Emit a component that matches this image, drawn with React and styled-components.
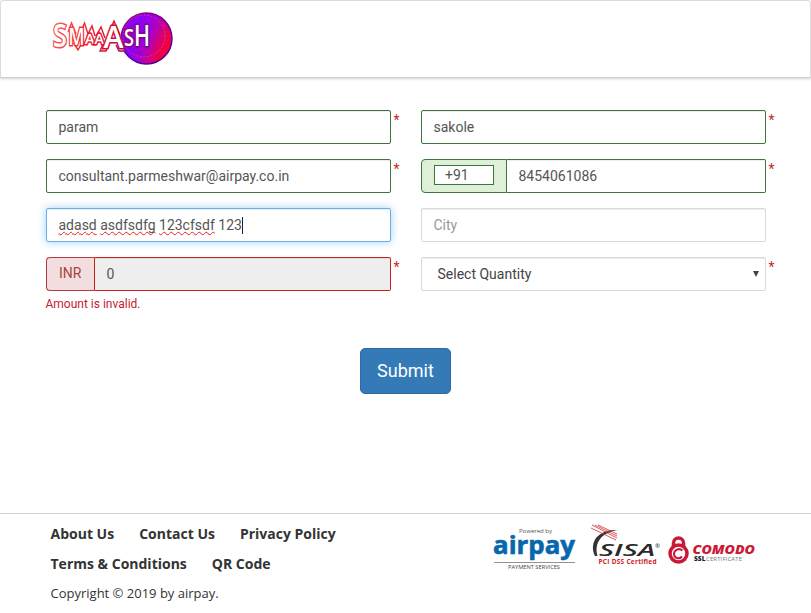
import React from "react";
import styled, { createGlobalStyle, css } from "styled-components";

const GlobalStyle = createGlobalStyle`
  * { box-sizing: border-box; }
  body { margin: 0; background: #fff; color: #555; font: 14px/20px Roboto, sans-serif; }
`;

const tones = { valid: "#3c763d", error: "#c9201c", idle: "#d9d9d9", focus: "#66afe9" };

const Page = styled.div`
  height: 613px;
  display: flex;
  flex-direction: column;
  overflow: hidden;
`;

const Header = styled.header`
  height: 78px;
  flex: none;
  padding: 8px 0 0 49px;
  border: 1px solid #dcdcdc;
  border-bottom-color: #d0d0d0;
  border-radius: 4px 4px 0 0;
  box-shadow: 0 1px 3px rgba(0, 0, 0, 0.18);
`;

const Form = styled.form`
  flex: 1;
  padding: 32px 45px 0 46px;
`;

const Fields = styled.div`
  display: grid;
  grid-template-columns: 345px 345px;
  grid-auto-rows: 34px;
  gap: 15px 30px;
`;

const Field = styled.div`
  position: relative;
  display: flex;
  min-width: 0;
`;

const Star = styled.span`
  position: absolute;
  left: 347.5px;
  top: 0;
  color: #d01f1f;
  font-size: 14px;
`;

const Control = styled.div`
  flex: 1;
  display: flex;
  align-items: center;
  padding: 0 11.5px;
  border: 1px solid ${(p) => tones[p.$tone]};
  border-radius: ${(p) => (p.$joined ? "0 2px 2px 0" : "2px")};
  border-left-width: ${(p) => (p.$joined ? 0 : 1)}px;
  background: ${(p) => (p.$disabled ? "#eee" : "#fff")};
  color: ${(p) => (p.$placeholder ? "#999" : "#555")};
  box-shadow: inset 0 1px 1px rgba(0, 0, 0, 0.075);
  ${(p) =>
    p.$tone === "focus" &&
    css`
      box-shadow: inset 0 1px 1px rgba(0, 0, 0, 0.075), 0 0 8px rgba(102, 175, 233, 0.6);
    `}
`;

const Misspelled = styled.span`
  text-decoration: underline wavy #f02020 1px;
  text-decoration-skip-ink: none;
  text-underline-offset: 1px;
`;

const Typed = styled.span`
  white-space: pre;
`;

const Caret = styled.span`
  width: 1px;
  height: 17px;
  background: #222;
`;

const Addon = styled.div`
  flex: none;
  width: ${(p) => p.$width}px;
  display: flex;
  align-items: center;
  padding: 0 12px 2px;
  border: 1px solid ${(p) => (p.$tone === "valid" ? "#3c763d" : "#b23a38")};
  border-right-color: ${(p) => tones[p.$tone]};
  border-radius: 4px 0 0 4px;
  background: ${(p) => (p.$tone === "valid" ? "#dff0d8" : "#f2dede")};
  color: #a94442;
`;

const CodeBox = styled.div`
  width: 60px;
  height: 20px;
  padding-left: 10px;
  border: 1px solid #3c763d;
  background: #fff;
  color: #555;
  line-height: 19px;
`;

const SelectControl = styled(Control)`
  justify-content: space-between;
  padding: 0 6px 0 15.5px;
  color: #444;
`;

const ErrorText = styled.div`
  margin: 5px 0 0 -0.5px;
  color: #c4202f;
  font-size: 12px;
  line-height: 17px;
`;

const Submit = styled.button`
  display: block;
  width: 91px;
  height: 46px;
  margin: 35px 0 0 314px;
  padding: 0;
  border: 1px solid #2e6da4;
  border-radius: 5px;
  background: #337ab7;
  color: #fff;
  font: 18px/24px Roboto, sans-serif;
`;

const Footer = styled.footer`
  height: 100px;
  flex: none;
  display: flex;
  border-top: 1px solid #d5d5d5;
  padding-left: 50.5px;
  font-family: "Open Sans", sans-serif;
  color: #333;
`;

const FooterText = styled.div`
  width: 442.5px;
  padding-top: 5px;
`;

const Links = styled.nav`
  display: flex;
  gap: 25px;
  height: 30px;
  align-items: center;
  font-size: 14px;
  font-weight: 700;
`;

const Copyright = styled.div`
  font-size: 13px;
  line-height: 29px;
`;

const Badges = styled.div`
  padding-top: 6px;
`;

const Svg = styled.svg`
  display: block;
  overflow: visible;
`;

const logoLetters = [
  ["S", 53, 46.5, 32, 14],
  ["M", 68.5, 44.5, 23, 16],
  ["A", 85, 43.5, 15, 9.5],
  ["A", 94.5, 43.5, 15, 9.5],
  ["A", 103.5, 48, 30, 20],
  ["S", 124, 46, 24, 10],
  ["H", 134, 46, 28, 16],
];

function SmaaashLogo() {
  return (
    <Svg width="126" height="60" viewBox="50 9 126 60" role="img" aria-label="Smaaash">
      <defs>
        <linearGradient id="ball" x1="0.1" y1="0.3" x2="1" y2="0.7">
          <stop offset="0.2" stopColor="#8b00f5" />
          <stop offset="0.48" stopColor="#a600d0" />
          <stop offset="0.85" stopColor="#f3003f" />
        </linearGradient>
        <linearGradient id="rim" x1="0.2" y1="0" x2="0.8" y2="1">
          <stop stopColor="#b0004d" />
          <stop offset="0.5" stopColor="#4c00ad" />
          <stop offset="1" stopColor="#4b00a6" />
        </linearGradient>
        <linearGradient id="outline" gradientUnits="userSpaceOnUse" x1="52" y1="22" x2="150" y2="48">
          <stop stopColor="#fb6663" />
          <stop offset="0.35" stopColor="#f3202a" />
          <stop offset="0.63" stopColor="#cf1035" />
          <stop offset="0.78" stopColor="#8d086f" />
          <stop offset="1" stopColor="#60109b" />
        </linearGradient>
      </defs>
      <circle cx="146.5" cy="38.5" r="25.5" fill="url(#ball)" stroke="url(#rim)" strokeWidth="1.4" />
      <circle cx="144" cy="36" r="21" fill="none" stroke="#ef74c1" strokeWidth="0.7" strokeDasharray="2 1.5" opacity="0.6" />
      <g fill="#fff" stroke="url(#outline)" strokeWidth="1.4">
        <path d="M68 32 L71.5 23 L76 34 M80 34 L84.5 23 L88 34 M87 36 L92 26 L95 36 M96 36 L101 27 L105 38 M108 35 L114 21 L120 35" />
        <path d="M73.5 43 L78 50 L82 43 M103 44 L100 51 H106 L109 45 M116 45 L119 51 H125 L122 44" />
      </g>
      <g fontFamily="Open Sans, sans-serif" fontWeight="600" fill="#fff" stroke="url(#outline)" strokeWidth="3" paintOrder="stroke" strokeLinejoin="miter">
        {logoLetters.map(([letter, x, y, size, width], i) => (
          <text key={i} x={x} y={y} fontSize={size} textLength={width} lengthAdjust="spacingAndGlyphs">{letter}</text>
        ))}
      </g>
    </Svg>
  );
}

function PartnerLogos() {
  return (
    <Svg width="268" height="52" viewBox="493 520 268 52" role="img" aria-label="airpay, SISA and Comodo">
      <g fontFamily="Open Sans, sans-serif">
        <text x="519" y="533" fontSize="6" fill="#555" textLength="33">Powered by</text>
        <text x="493" y="554" fontSize="25" fontWeight="700" fill="#0866ad" stroke="#0866ad" strokeWidth="0.6" textLength="82" lengthAdjust="spacingAndGlyphs">airpay</text>
        <path d="M494 562.5H575" stroke="#929292" />
        <text x="508" y="569" fontSize="5" fontWeight="400" fill="#444" textLength="52" lengthAdjust="spacingAndGlyphs">PAYMENT SERVICES</text>
      </g>
      <path d="M617 530 C600 529 588 541 595 556 L597.5 556 C594 543 601 533 617 530Z" fill="#333" />
      <path d="M592 525 L617 538 M591 528 L616 540 M595 525 L617 536 M598 525 L617 534" stroke="#ce3034" strokeWidth="0.8" />
      <g fontFamily="Open Sans, sans-serif" fontStyle="italic">
        <text x="599" y="556" fontSize="15.5" fontWeight="600" fill="#292929" textLength="56" lengthAdjust="spacingAndGlyphs">SISA</text>
        <text x="655" y="548" fontSize="6" fontStyle="normal" fill="#222">®</text>
      </g>
      <text x="598.5" y="564" fontSize="6.5" fontFamily="Open Sans, sans-serif" fontWeight="700" fill="#d32027" textLength="58">PCI DSS Certified</text>
      <path d="M673.5 546 V543 A5 5 0 0 1 683.5 543 V546" fill="none" stroke="#c91937" strokeWidth="3.5" />
      <circle cx="678.5" cy="553.5" r="8.5" fill="#fff" stroke="#c91937" strokeWidth="3.5" />
      <path d="M682.5 550.5 C679 547.5 674 550 674 554 C674 558 679 560 682 556.5" fill="none" stroke="#c91937" strokeWidth="2" />
      <text x="692.5" y="554" fontFamily="Open Sans, sans-serif" fontSize="11.5" fontWeight="800" fontStyle="italic" fill="#cc1935" textLength="62.5" lengthAdjust="spacingAndGlyphs">COMODO</text>
      <text x="694" y="560.5" fontFamily="Open Sans, sans-serif" fontSize="6" fontWeight="800" fill="#222" textLength="11.5" lengthAdjust="spacingAndGlyphs">SSL</text>
      <text x="706" y="560.5" fontFamily="Open Sans, sans-serif" fontSize="6" fill="#777" textLength="36">CERTIFICATE</text>
    </Svg>
  );
}

export default function App() {
  return (
    <Page>
      <GlobalStyle />
      <Header><SmaaashLogo /></Header>
      <Form>
        <Fields>
          <Field><Control $tone="valid">param</Control><Star>*</Star></Field>
          <Field><Control $tone="valid">sakole</Control><Star>*</Star></Field>
          <Field><Control $tone="valid">consultant.parmeshwar@airpay.co.in</Control><Star>*</Star></Field>
          <Field>
            <Addon $tone="valid" $width={86}><CodeBox>+91</CodeBox></Addon>
            <Control $tone="valid" $joined>8454061086</Control><Star>*</Star>
          </Field>
          <Field>
            <Control $tone="focus">
              <Typed><Misspelled>adasd</Misspelled> <Misspelled>asdfsdfg</Misspelled> <Misspelled>123cfsdf</Misspelled> 123</Typed><Caret />
            </Control>
          </Field>
          <Field><Control $tone="idle" $placeholder>City</Control></Field>
          <Field>
            <Addon $tone="error" $width={49}>INR</Addon>
            <Control $tone="error" $joined $disabled>0</Control><Star>*</Star>
          </Field>
          <Field>
            <SelectControl $tone="idle">
              Select Quantity
              <svg width="6" height="6" viewBox="0 0 6 6"><path d="M0 0H6L3 6Z" fill="#444" /></svg>
            </SelectControl>
            <Star>*</Star>
          </Field>
        </Fields>
        <ErrorText>Amount is invalid.</ErrorText>
        <Submit type="button">Submit</Submit>
      </Form>
      <Footer>
        <FooterText>
          <Links><span>About Us</span><span>Contact Us</span><span>Privacy Policy</span></Links>
          <Links><span>Terms &amp; Conditions</span><span>QR Code</span></Links>
          <Copyright>Copyright © 2019 by airpay.</Copyright>
        </FooterText>
        <Badges><PartnerLogos /></Badges>
      </Footer>
    </Page>
  );
}
